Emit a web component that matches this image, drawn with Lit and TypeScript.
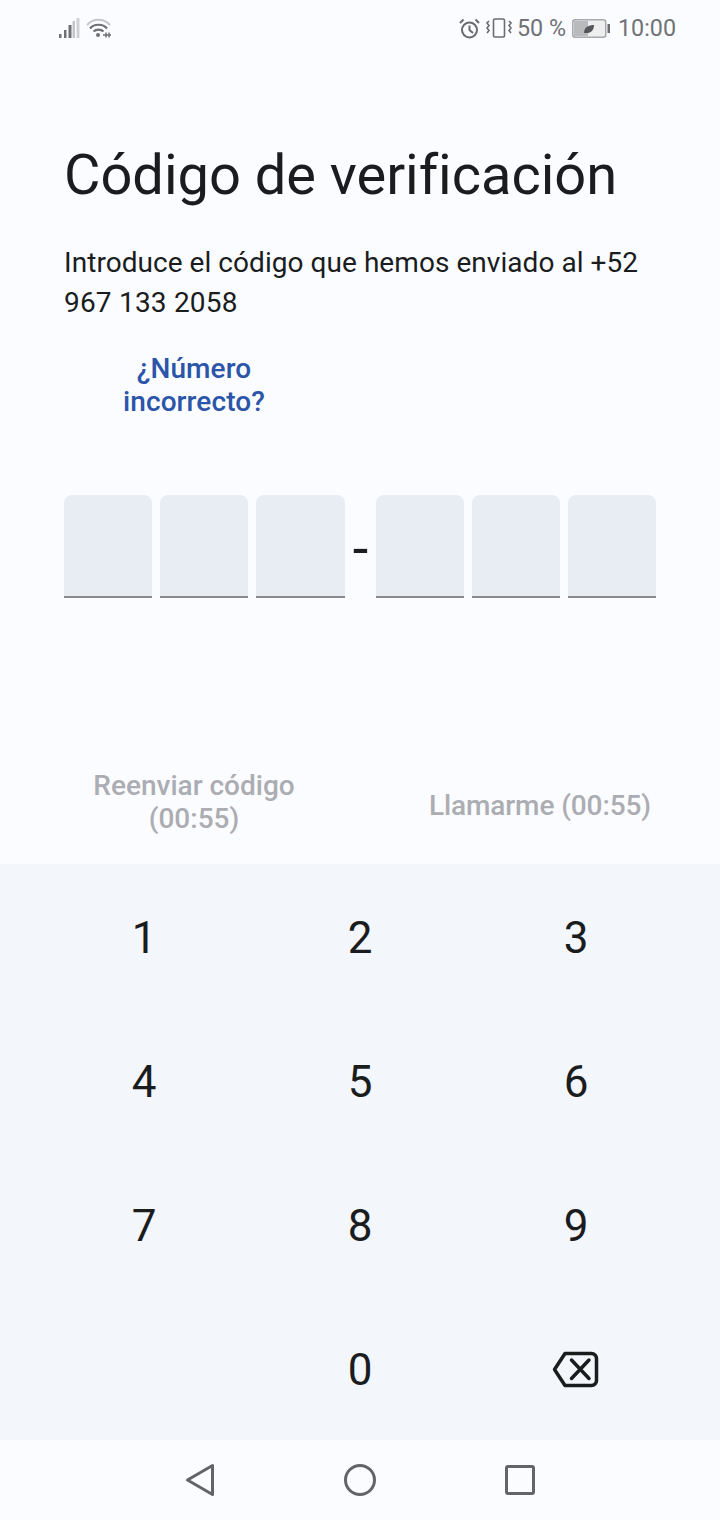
import { LitElement, html, css } from "lit";
import { customElement } from "lit/decorators.js";

@customElement("app-root")
export class AppRoot extends LitElement {
  static styles = css`
    :host { display: block; width: 720px; height: 1520px; background: #fbfcff; font-family: Roboto, "Liberation Sans", sans-serif; color: #1a1c1e; overflow: hidden; }
    .page { display: flex; flex-direction: column; height: 1520px; }
    .status { height: 56px; display: flex; align-items: center; justify-content: space-between; padding: 0 44px 0 58px; color: #707276; flex: none; }
    .left, .right { display: flex; align-items: center; }
    .right { font-size: 23.3px; color: #707276; }
    .vib { margin-left: 6px; }
    .pct { margin-left: 5px; }
    .bat { margin-left: 6px; }
    .time { margin-left: 8px; }
    .wifi { margin-left: 6px; }
    .main { flex: 1; padding: 0 64px; display: flex; flex-direction: column; }
    h1 { margin: 83px 0 0; font-weight: 400; font-size: 56px; line-height: 72px; letter-spacing: -0.03px; }
    .sub { margin: 32px 0 0; font-size: 28px; line-height: 40px; width: 592px; letter-spacing: 0.05px; }
    .num { letter-spacing: 0.2px; }
    .link { margin-top: 29px; width: 260px; text-align: center; font-size: 28px; font-weight: 500; line-height: 33px; color: #2a55a8; letter-spacing: 0.1px; }
    .otp { display: flex; margin-top: 77px; height: 103px; }
    .cell { width: 88px; height: 103px; box-sizing: border-box; background: #e8ecf3; border-bottom: 2px solid #8a8b8f; border-radius: 8px 8px 0 0; margin-right: 8px; }
    .cell.wide { width: 89px; margin-right: 0; }
    .cell.last { margin-right: 0; }
    .dash { width: 31px; height: 103px; text-align: center; font-size: 56px; line-height: 109px; flex: none; }
    .actions { margin-top: 172px; display: flex; align-items: center; height: 64px; color: #abadb2; font-size: 28px; font-weight: 500; line-height: 33px; }
    .resend { width: 260px; text-align: center; }
    .call { width: 332px; text-align: right; padding: 6px 5px 0 0; box-sizing: border-box; letter-spacing: -0.1px; }
    .keypad { flex: none; height: 576px; background: #f3f6fb; padding: 2px 36px 0; box-sizing: border-box; display: grid; grid-template-columns: repeat(3, 216px); grid-auto-rows: 144px; }
    .key { display: flex; align-items: center; justify-content: center; font-size: 44px; color: #1a1c1e; }
    .back { margin-bottom: 2px; }
    .nav { flex: none; height: 80px; display: flex; justify-content: center; align-items: center; }
    .nav span { width: 160px; display: flex; justify-content: center; }
    svg { display: block; }
  `;

  render() {
    const keys = ["1", "2", "3", "4", "5", "6", "7", "8", "9", "", "0"];
    return html`<div class="page">
      <div class="status">
        <div class="left">
          <svg width="22" height="20" viewBox="0 0 22 20">
            <rect x="1" y="16" width="2.500" height="4" fill="#6e7074"/>
            <rect x="6" y="12" width="2.500" height="8" fill="#6e7074"/>
            <rect x="10.500" y="7" width="3" height="13" fill="#6e7074"/>
            <rect x="14.500" y="3" width="2.500" height="17" fill="#c4c5c9"/>
            <rect x="18.500" y="0" width="3" height="20" fill="#d0d1d4"/>
          </svg>
          <svg class="wifi" width="26" height="20" viewBox="0 0 26 20" fill="none">
            <path d="M1 7C7 0 18 0 24 7" stroke="#c4c5c9" stroke-width="2"/>
            <path d="M4 10.500C8 5.500 17 5.500 21 10.500" stroke="#6e7074" stroke-width="2.200"/>
            <path d="M7.500 13.500C10 11 15 11 17.500 13.500" stroke="#6e7074" stroke-width="2.200"/>
            <circle cx="12" cy="17" r="2" fill="#6e7074"/>
            <path d="M17 17h8M20 14.500v5M23 14.500v5" stroke="#6e7074" stroke-width="1.500"/>
          </svg>
        </div>
        <div class="right">
          <svg width="21" height="21" viewBox="0 0 21 21" fill="none" stroke="#6a6c70" stroke-width="2">
            <circle cx="10.500" cy="12" r="7.500"/><path d="M10.500 7.500V12l3.500 3M1 5 4.500 1.500M20 5 16.500 1.500"/>
          </svg>
          <svg class="vib" width="26" height="20" viewBox="0 0 26 20" fill="none" stroke="#6a6c70" stroke-width="1.600">
            <rect x="7.500" y="1" width="11" height="18" rx="1.500"/>
            <path d="M3 3 1 5l2 2.500L1 10l2 2.500L1 15M23 3l2 2-2 2.500 2 2.500-2 2.500 2 2.500"/>
          </svg>
          <span class="pct">50 %</span>
          <svg class="bat" width="38" height="19" viewBox="0 0 38 19">
            <rect x="0.750" y="0.750" width="33" height="17.500" rx="2.500" fill="#eeeeef" stroke="#a8a9ac" stroke-width="1.500"/>
            <rect x="2" y="2" width="14" height="15" fill="#b9babc"/>
            <path d="M12 14c0-6 5-8 10-8 0 6-4 8.500-8 8z" fill="#55575a"/>
            <rect x="35.500" y="5" width="2.500" height="9" fill="#6a6c70"/>
          </svg>
          <span class="time">10:00</span>
        </div>
      </div>
      <div class="main">
        <h1>Código de verificación</h1>
        <div class="sub">Introduce el código que hemos enviado al +52 <span class="num">967 133 2058</span></div>
        <div class="link">¿Número incorrecto?</div>
        <div class="otp">
          <div class="cell"></div><div class="cell"></div><div class="cell wide"></div>
          <div class="dash">-</div>
          <div class="cell"></div><div class="cell"></div><div class="cell last"></div>
        </div>
        <div class="actions">
          <div class="resend">Reenviar código (00:55)</div>
          <div class="call">Llamarme (00:55)</div>
        </div>
      </div>
      <div class="keypad">
        ${keys.map((k) => html`<div class="key">${k}</div>`)}
        <div class="key">
          <svg class="back" width="48" height="37" viewBox="0 0 48 37" fill="none" stroke="#1a1c1e" stroke-width="3.500" stroke-linejoin="round" stroke-linecap="round">
            <path d="M2.500 18.500 13 2.500H39.500a5 5 0 0 1 5 5v22a5 5 0 0 1-5 5H13z" />
            <path d="M19.500 9 37 27.500M37 9 19.500 27.500"/>
          </svg>
        </div>
      </div>
      <div class="nav">
        <span><svg width="32" height="34" viewBox="0 0 32 34" fill="none" stroke="#636467" stroke-width="3" stroke-linejoin="round"><path d="M3.500 17 28.500 2.500V31.500Z"/></svg></span>
        <span><svg width="34" height="34" viewBox="0 0 34 34" fill="none" stroke="#636467" stroke-width="3"><circle cx="17" cy="17" r="14.500"/></svg></span>
        <span><svg width="30" height="30" viewBox="0 0 30 30" fill="none" stroke="#636467" stroke-width="3" stroke-linejoin="round"><rect x="1.500" y="1.500" width="27" height="27" rx="1.500"/></svg></span>
      </div>
    </div>`;
  }
}
